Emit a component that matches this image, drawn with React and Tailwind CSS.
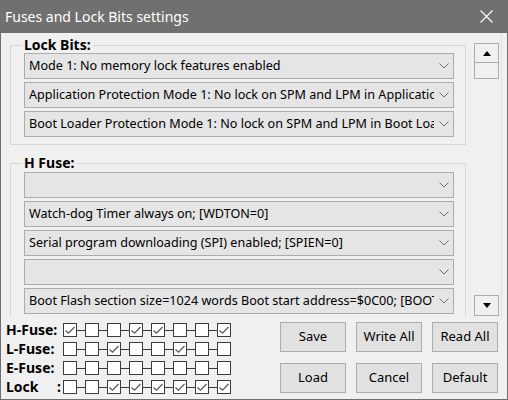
import React from 'react'

const font = { fontFamily: '"Noto Sans", "Open Sans", sans-serif' }

const lockBits = [
  'Mode 1: No memory lock features enabled',
  'Application Protection Mode 1: No lock on SPM and LPM in Application Section',
  'Boot Loader Protection Mode 1: No lock on SPM and LPM in Boot Loader Section',
]

const hFuse = [
  '',
  'Watch-dog Timer always on; [WDTON=0]',
  'Serial program downloading (SPI) enabled; [SPIEN=0]',
  '',
  'Boot Flash section size=1024 words Boot start address=$0C00; [BOOTSZ=00]',
]

const fuseRows = [
  { label: 'H-Fuse:', bits: [1, 0, 0, 1, 1, 0, 0, 1] },
  { label: 'L-Fuse:', bits: [0, 0, 1, 0, 0, 1, 0, 0] },
  { label: 'E-Fuse:', bits: [0, 0, 0, 0, 0, 0, 0, 0] },
  { label: 'Lock', bits: [0, 0, 1, 1, 1, 1, 1, 1] },
]

function Combo({ text }) {
  return (
    <div className="h-[26px] border border-[#acacac] bg-[#e5e5e5] flex items-center">
      <span className="flex-1 min-w-0 pl-[4px] overflow-hidden whitespace-nowrap text-[12.6px] leading-[16px] text-black">
        {text}
      </span>
      <span className="w-[19px] shrink-0 flex justify-center">
        <svg width="10" height="6" viewBox="0 0 10 6">
          <path d="M0.5 0.5 L5 5 L9.5 0.5" fill="none" stroke="#6d6d6d" strokeWidth="1" />
        </svg>
      </span>
    </div>
  )
}

function Group({ title, items, className }) {
  return (
    <fieldset className={`w-[456px] min-w-0 border border-[#d8d8d8] pl-[13px] pr-[11px] ${className}`}>
      <legend className="-ml-[2px] px-[2px] text-[14px] leading-[16px] font-bold text-black">{title}</legend>
      <div className="flex flex-col gap-[3px]">
        {items.map((t, i) => (
          <Combo key={i} text={t} />
        ))}
      </div>
    </fieldset>
  )
}

function Bit({ on }) {
  return (
    <div className="w-[14px] h-[14px] border border-[#3c3c3c] bg-white flex items-center justify-center">
      {on ? (
        <svg width="12" height="12" viewBox="0 0 12 12">
          <path d="M1.5 6.5 L4.5 9.2 L10.5 3" fill="none" stroke="#5a5a5a" strokeWidth="1.3" />
        </svg>
      ) : null}
    </div>
  )
}

function Button({ children }) {
  return (
    <div className="w-[66px] h-[30px] border border-[#adadad] bg-[#e1e1e1] flex items-center justify-center text-[13px] text-black">
      {children}
    </div>
  )
}

export default function App() {
  return (
    <div className="w-[508px] h-[400px] bg-[#f0f0f0] flex flex-col border-x border-b border-[#707070] overflow-hidden" style={font}>
      <div className="h-[33px] shrink-0 bg-[#707070] flex items-center justify-between pl-[4px] pr-[14px] text-white text-[14px]">
        <span>Fuses and Lock Bits settings</span>
        <svg width="13" height="13" viewBox="0 0 13 13">
          <path d="M0.5 0.5 L12.5 12.5 M12.5 0.5 L0.5 12.5" stroke="#ffffff" strokeWidth="1.1" />
        </svg>
      </div>

      <div className="h-[284px] shrink-0 flex">
        <div className="w-[473px] shrink-0 overflow-hidden pl-[9px] pt-[4px] flex flex-col gap-[10px]">
          <Group title="Lock Bits:" items={lockBits} className="pb-[7px]" />
          <Group title="H Fuse:" items={hFuse} className="pt-[1px] pb-[7px]" />
        </div>
        <div className="w-[25px] shrink-0 flex flex-col justify-between pt-[10px] pb-[1px]">
          <div className="flex flex-col">
            <div className="h-[20px] border border-[#adadad] flex items-center justify-center">
              <svg width="8" height="5" viewBox="0 0 8 5"><path d="M0 5 L4 0 L8 5 Z" fill="#000" /></svg>
            </div>
            <div className="h-[16px] border border-t-0 border-[#adadad]" />
          </div>
          <div className="h-[21px] border border-[#adadad] flex items-center justify-center">
            <svg width="8" height="5" viewBox="0 0 8 5"><path d="M0 0 L8 0 L4 5 Z" fill="#000" /></svg>
          </div>
        </div>
        <div className="w-[3px] border-r border-[#e2e2e2]" />
      </div>

      <div className="flex-1 flex justify-between pr-[9px]">
        <div className="pl-[5px] pt-[6px] flex flex-col gap-[5px]">
          {fuseRows.map((r) => (
            <div key={r.label} className="h-[14px] flex items-center">
              <div className="w-[57px] flex justify-between pr-[2px] text-[14px] leading-[14px] font-bold text-black">
                <span>{r.label}</span>
                {r.label === 'Lock' ? <span>:</span> : null}
              </div>
              {r.bits.map((b, i) => (
                <React.Fragment key={i}>
                  {i > 0 ? <div className="w-[8px] h-px bg-[#3c3c3c]" /> : null}
                  <Bit on={b} />
                </React.Fragment>
              ))}
            </div>
          ))}
        </div>
        <div className="pt-[5px] grid grid-cols-3 gap-x-[10px] gap-y-[11px] content-start">
          <Button>Save</Button>
          <Button>Write All</Button>
          <Button>Read All</Button>
          <Button>Load</Button>
          <Button>Cancel</Button>
          <Button>Default</Button>
        </div>
      </div>
    </div>
  )
}
